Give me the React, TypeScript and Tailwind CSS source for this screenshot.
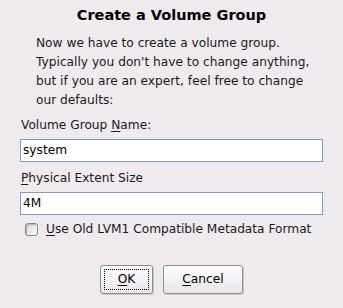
export default function App() {
  return (
    <div className="w-[343px] h-[308px] overflow-hidden bg-[#eeeaee] font-['DejaVu_Sans','Liberation_Sans',sans-serif] text-[12.2px] text-[#1a1a1a]">
      <h1 className="pt-[5px] text-center text-[14.5px] font-bold leading-[20px] text-black">Create a Volume Group</h1>

      <p className="mt-[9px] ml-[36px] leading-[19px]">
        Now we have to create a volume group.
        <br />
        Typically you don't have to change anything,
        <br />
        but if you are an expert, feel free to change
        <br />
        our defaults:
      </p>

      <div className="px-[20px]">
        <label className="mt-[6px] block pl-[1px] leading-[19px]">
          Volume Group <span className="underline underline-offset-2">N</span>ame:
        </label>
        <div className="mt-[4px] h-[23px] w-[303px] border border-[#7f9bcf] bg-white pl-[2px] leading-[21px] text-black">system</div>

        <label className="mt-[7px] block pl-[1px] leading-[19px]">
          <span className="underline underline-offset-2">P</span>hysical Extent Size
        </label>
        <div className="mt-[4px] h-[23px] w-[303px] border border-[#7f9bcf] bg-white pl-[2px] leading-[21px] text-black">4M</div>

        <div className="mt-[5px] flex items-center whitespace-nowrap pl-[5px] leading-[19px]">
          <span className="h-[13px] w-[13px] shrink-0 rounded-[3px] border border-[#8a878a] bg-gradient-to-br from-[#d8d4d8] to-white shadow-[inset_1px_1px_1px_#b5b1b5]" />
          <span className="ml-[8px]">
            <span className="underline underline-offset-2">U</span>se Old LVM1 Compatible Metadata Format
          </span>
        </div>
      </div>

      <div className="mt-[26px] flex justify-center gap-[10px]">
        <button className="flex h-[29px] w-[53px] items-center justify-center rounded-[3px] border border-[#8e8b8e] bg-gradient-to-b from-white to-[#e8e4e8] p-[3px] shadow-[1px_1px_0_#c9c5c9]">
          <span className="flex h-full w-full items-center justify-center border border-dotted border-black text-black">
            <span className="underline underline-offset-2">O</span>K
          </span>
        </button>
        <button className="flex h-[29px] w-[80px] items-center justify-center rounded-[3px] border border-[#8e8b8e] bg-gradient-to-b from-white to-[#e8e4e8] text-black shadow-[1px_1px_0_#c9c5c9]">
          <span>
            <span className="underline underline-offset-2">C</span>ancel
          </span>
        </button>
      </div>
    </div>
  );
}
